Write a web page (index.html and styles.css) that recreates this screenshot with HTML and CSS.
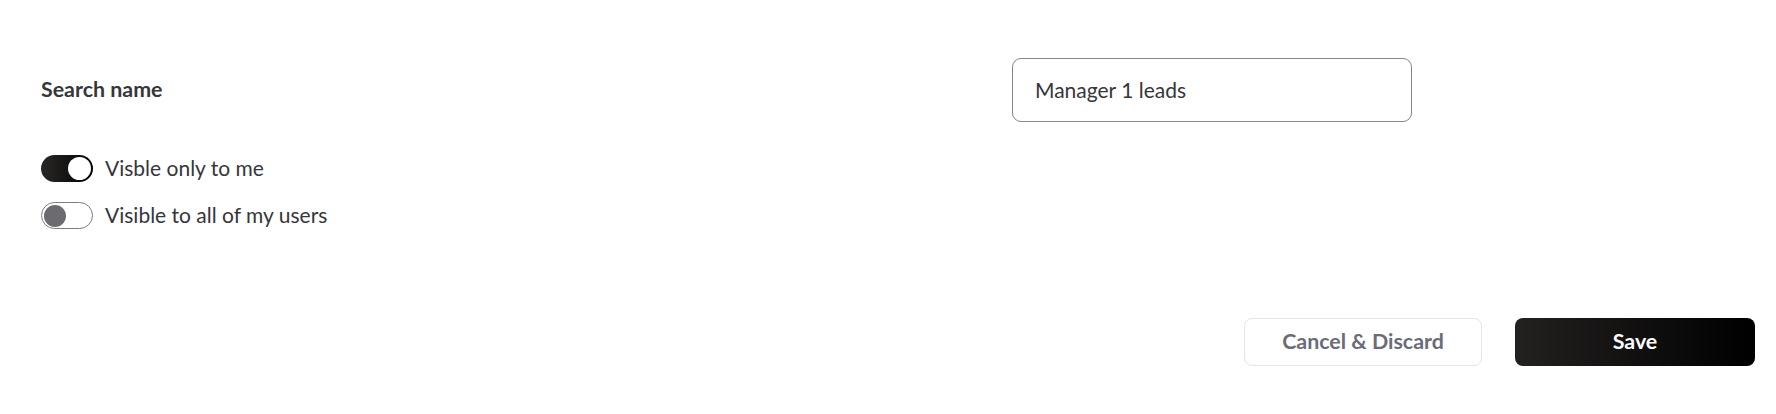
FILE: index.html
```html
<!DOCTYPE html>
<html lang="en">
<head>
<meta charset="utf-8">
<title>Save search</title>
<link rel="stylesheet" href="styles.css">
</head>
<body>
<div class="form">
  <div class="name-row">
    <label class="name-label" for="search-name">Search name</label>
    <input class="name-input" id="search-name" type="text" value="Manager 1 leads">
  </div>
  <div class="toggles">
    <div class="toggle-row">
      <span class="switch on"><span class="knob"></span></span>
      <span class="toggle-text">Visble only to me</span>
    </div>
    <div class="toggle-row">
      <span class="switch off"><span class="knob"></span></span>
      <span class="toggle-text">Visible to all of my users</span>
    </div>
  </div>
  <div class="actions">
    <button class="btn btn-cancel" type="button">Cancel &amp; Discard</button>
    <button class="btn btn-save" type="button">Save</button>
  </div>
</div>
</body>
</html>
```
FILE: styles.css
```css
* { box-sizing: border-box; }
html, body { margin: 0; background: #fff; }
body {
  font-family: Lato, "Noto Sans", sans-serif;
  color: #333338;
}
.form {
  padding: 58px 21px 0 41px;
  display: flex;
  flex-direction: column;
}
.name-row {
  display: grid;
  grid-template-columns: 971px 400px;
  align-items: center;
  height: 64px;
}
.name-label {
  font-size: 21.4px;
  font-weight: 700;
  color: #36363b;
  padding-bottom: 2px;
}
.name-input {
  width: 400px;
  height: 64px;
  border: 1px solid #86868b;
  border-radius: 9px;
  padding: 0 22px 2px;
  font-family: inherit;
  font-size: 21px;
  color: #36363b;
  background: #fff;
  outline: none;
}
.toggles {
  margin-top: 33px;
  display: flex;
  flex-direction: column;
  gap: 20px;
}
.toggle-row {
  display: flex;
  align-items: center;
  gap: 12px;
  height: 27px;
}
.switch {
  width: 52px;
  height: 27px;
  border-radius: 14px;
  display: flex;
  align-items: center;
  flex: none;
}
.switch.on {
  background: linear-gradient(90deg, #2a2827 0%, #000 100%);
  justify-content: flex-end;
  padding: 0 2px;
}
.switch.on .knob {
  width: 23px;
  height: 23px;
  border-radius: 50%;
  background: #fff;
}
.switch.off {
  border: 1px solid #7c7c80;
  background: #fff;
  padding: 0 2px;
}
.switch.off .knob {
  width: 22px;
  height: 22px;
  border-radius: 50%;
  background: #6c6c70;
}
.toggle-text {
  font-size: 21px;
  color: #36363b;
  padding-bottom: 2px;
}
.actions {
  margin-top: 89px;
  display: flex;
  justify-content: flex-end;
  gap: 33px;
}
.btn {
  height: 48px;
  border-radius: 8px;
  font-family: inherit;
  font-size: 21.4px;
  font-weight: 700;
  padding: 0 0 2px;
  cursor: pointer;
}
.btn-cancel {
  width: 238px;
  background: #fff;
  border: 1px solid #e4e4ea;
  color: #6c6c78;
}
.btn-save {
  width: 240px;
  border: none;
  color: #fff;
  background: linear-gradient(90deg, #232120 0%, #000 100%);
}
```
